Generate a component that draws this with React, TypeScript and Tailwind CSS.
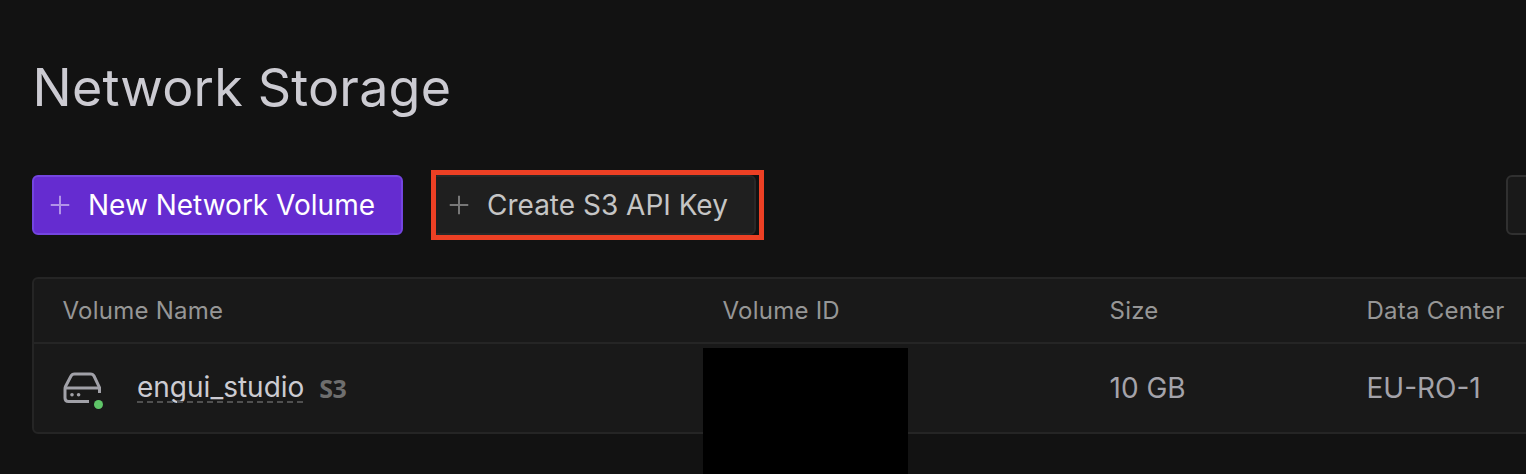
import React from "react";

function Plus({ className }: { className: string }) {
  return (
    <svg className={`h-5 w-5 shrink-0 ${className}`} viewBox="0 0 20 20" fill="none" stroke="currentColor" strokeWidth="2">
      <path d="M10 .75v18.5M.75 10h18.5" />
    </svg>
  );
}

function DriveIcon() {
  return (
    <svg className="-ml-px mt-1 mr-px h-[38px] w-[42px] shrink-0" viewBox="0 0 42 38" fill="none">
      <g stroke="#a1a1a8" strokeWidth="3">
        <path d="M37.5 22V16.5L32 5Q31 2.9 28.5 2.9H12.5Q10 2.9 9 5L3.5 15.5Q3 16.5 3 18V27Q3 30.5 6.5 30.5H27" />
        <path d="M3.5 17H37.5" />
      </g>
      <circle cx="10" cy="23.7" r="1.8" fill="#a1a1a8" />
      <circle cx="16.6" cy="23.7" r="1.8" fill="#a1a1a8" />
      <circle cx="36.5" cy="33.5" r="4.5" fill="#5fc568" />
    </svg>
  );
}

const columns = "grid w-[1700px] grid-cols-[660px_387px_257px_1fr] pl-[28.5px]";

export default function App() {
  return (
    <main className="h-[474px] w-full overflow-hidden bg-[#121212] pl-8 font-['Inter',sans-serif]">
      <h1 className="pt-[57px] pl-[0.5px] text-[52px] leading-[62px] tracking-[0.2px] text-[#cccbd2]">Network Storage</h1>

      <div className="mt-[56px] flex h-[60px] w-[1700px]">
        <button className="flex h-[60px] w-[371px] items-center rounded-[6px] border-2 border-[#7445e0] bg-[#652cd0] pl-4 text-[28px] whitespace-nowrap text-white">
          <Plus className="text-[#b193e8]" />
          <span className="ml-[18px]">New Network Volume</span>
        </button>
        <div className="relative ml-7 w-[325px]">
          <button className="flex h-[60px] w-full items-center rounded-[6px] border-2 border-[#282828] bg-[#1f1f1f] pl-4 text-[28px] whitespace-nowrap text-[#c5c5c5]">
            <Plus className="text-[#777777]" />
            <span className="ml-[18px]">Create S3 API Key</span>
          </button>
          <div className="absolute -top-[5px] left-0 h-[70px] w-[333px] border-[5px] border-[#ed4024]" />
        </div>
        <div className="ml-[750px] h-[60px] w-[160px] rounded-[6px] border-2 border-[#303030] bg-[#191919]" />
      </div>

      <section className="mt-[42px] w-[1700px] rounded-[6px] border-2 border-[#252525] bg-[#191919]">
        <div className={`${columns} h-[65px] items-center border-b-2 border-[#252525] text-[24px] tracking-[0.24px] text-[#969696]`}>
          <span>Volume Name</span>
          <span>Volume ID</span>
          <span>Size</span>
          <span>Data Center</span>
        </div>
        <div className={`${columns} h-[88px] items-center text-[28px] text-[#a4a3aa]`}>
          <div className="flex items-center">
            <DriveIcon />
            <span className="relative ml-8 h-[30px] pl-[0.5px] leading-[28px] text-[#cccbd2]">
              engui_studio
              <svg className="absolute bottom-0 left-0 h-[2px] w-full" fill="none">
                <path d="M0 1H167" stroke="#505050" strokeWidth="2" strokeDasharray="6 4" />
              </svg>
            </span>
            <span className="ml-[15px] font-['Noto_Sans',sans-serif] text-[25px] leading-[28px] font-bold tracking-[-0.6px] text-[#6e6e6e]">S3</span>
          </div>
          <div className="relative h-full">
            <div className="absolute top-1 -left-[19.5px] h-[130px] w-[205px] bg-black" />
          </div>
          <span>10 GB</span>
          <span>EU-RO-1</span>
        </div>
      </section>
    </main>
  );
}
